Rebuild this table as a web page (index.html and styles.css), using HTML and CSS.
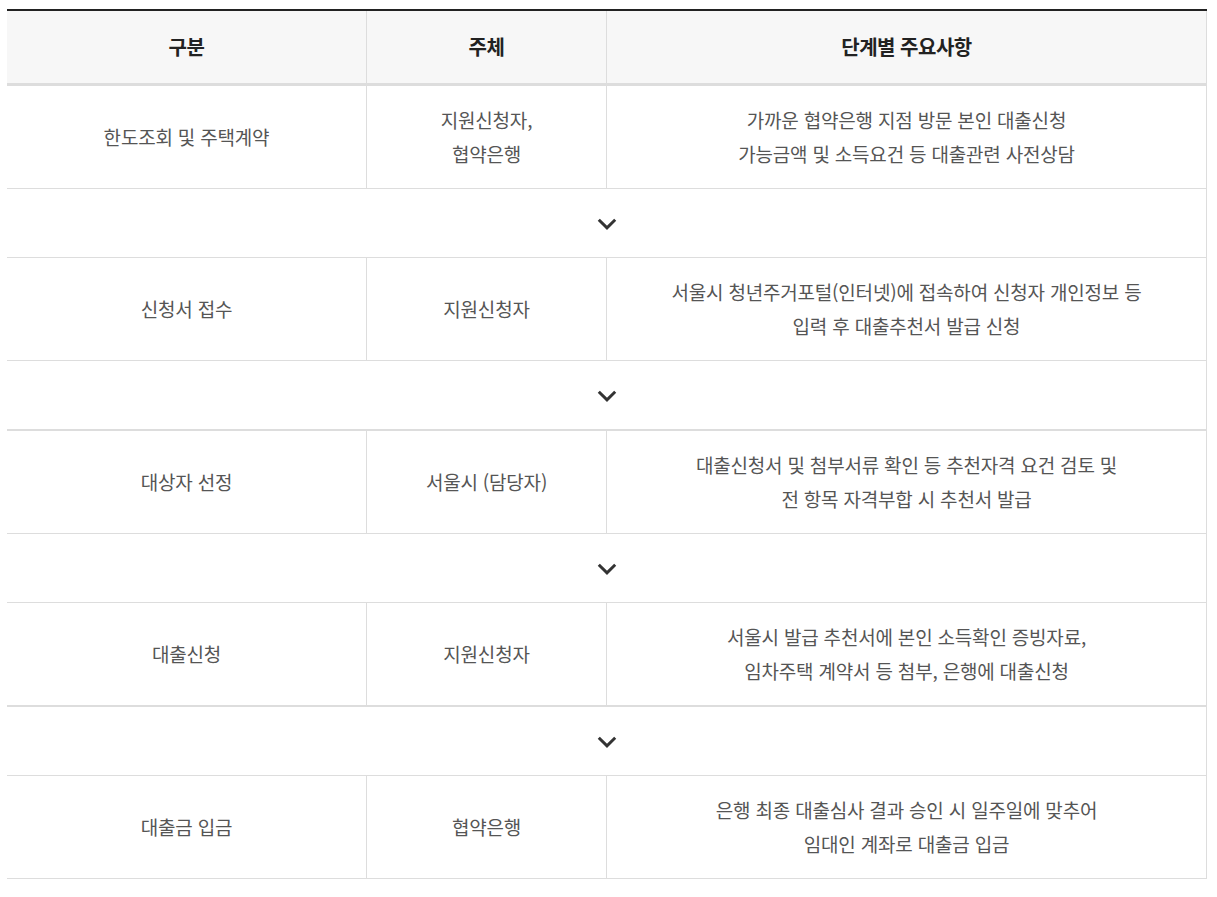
FILE: index.html
```html
<!DOCTYPE html>
<html lang="ko">
<head>
<meta charset="utf-8">
<title>대출 절차</title>
<link rel="stylesheet" href="styles.css">
</head>
<body>
<div class="flow">
  <div class="row head">
    <div class="cell">구분</div>
    <div class="cell">주체</div>
    <div class="cell">단계별 주요사항</div>
  </div>
  <div class="row step">
    <div class="cell">한도조회 및 주택계약</div>
    <div class="cell">지원신청자,<br>협약은행</div>
    <div class="cell">가까운 협약은행 지점 방문 본인 대출신청<br>가능금액 및 소득요건 등 대출관련 사전상담</div>
  </div>
  <div class="arrow"><svg width="20" height="12" viewBox="0 0 20 12"><polyline points="1.8,1.8 10,9.8 18.2,1.8" fill="none" stroke="#333" stroke-width="3"/></svg></div>
  <div class="row step">
    <div class="cell">신청서 접수</div>
    <div class="cell">지원신청자</div>
    <div class="cell">서울시 청년주거포털(인터넷)에 접속하여 신청자 개인정보 등<br>입력 후 대출추천서 발급 신청</div>
  </div>
  <div class="arrow thick"><svg width="20" height="12" viewBox="0 0 20 12"><polyline points="1.8,1.8 10,9.8 18.2,1.8" fill="none" stroke="#333" stroke-width="3"/></svg></div>
  <div class="row step">
    <div class="cell">대상자 선정</div>
    <div class="cell">서울시 (담당자)</div>
    <div class="cell">대출신청서 및 첨부서류 확인 등 추천자격 요건 검토 및<br>전 항목 자격부합 시 추천서 발급</div>
  </div>
  <div class="arrow"><svg width="20" height="12" viewBox="0 0 20 12"><polyline points="1.8,1.8 10,9.8 18.2,1.8" fill="none" stroke="#333" stroke-width="3"/></svg></div>
  <div class="row step thick">
    <div class="cell">대출신청</div>
    <div class="cell">지원신청자</div>
    <div class="cell">서울시 발급 추천서에 본인 소득확인 증빙자료,<br>임차주택 계약서 등 첨부, 은행에 대출신청</div>
  </div>
  <div class="arrow"><svg width="20" height="12" viewBox="0 0 20 12"><polyline points="1.8,1.8 10,9.8 18.2,1.8" fill="none" stroke="#333" stroke-width="3"/></svg></div>
  <div class="row step">
    <div class="cell">대출금 입금</div>
    <div class="cell">협약은행</div>
    <div class="cell">은행 최종 대출심사 결과 승인 시 일주일에 맞추어<br>임대인 계좌로 대출금 입금</div>
  </div>
</div>
</body>
</html>
```
FILE: styles.css
```css
* { box-sizing: border-box; }
body {
  margin: 0;
  background: #fff;
  font-family: "Noto Sans CJK KR", "Noto Sans", sans-serif;
}
.flow {
  width: 1200px;
  margin: 9px 0 0 7px;
  border-top: 2px solid #222;
}
.row {
  display: grid;
  grid-template-columns: 360px 240px 600px;
}
.cell {
  display: flex;
  align-items: center;
  justify-content: center;
  text-align: center;
  border-right: 1px solid #ddd;
  font-size: 19px;
  line-height: 34px;
  letter-spacing: -0.2px;
  color: #555;
}
.head {
  height: 75px;
  background: #f7f7f7;
  border-bottom: 3px solid #ddd;
}
.head .cell {
  font-weight: bold;
  color: #222;
  font-size: 20px;
  letter-spacing: -0.5px;
}
.step {
  height: 103px;
  border-bottom: 1px solid #ddd;
}
.step.thick { height: 104px; border-bottom-width: 2px; }
.arrow {
  height: 69px;
  border-bottom: 1px solid #ddd;
  border-right: 1px solid #ddd;
  display: flex;
  align-items: center;
  justify-content: center;
  padding-top: 2px;
}
.arrow.thick { height: 70px; border-bottom-width: 2px; }
.arrow svg { display: block; }
```
